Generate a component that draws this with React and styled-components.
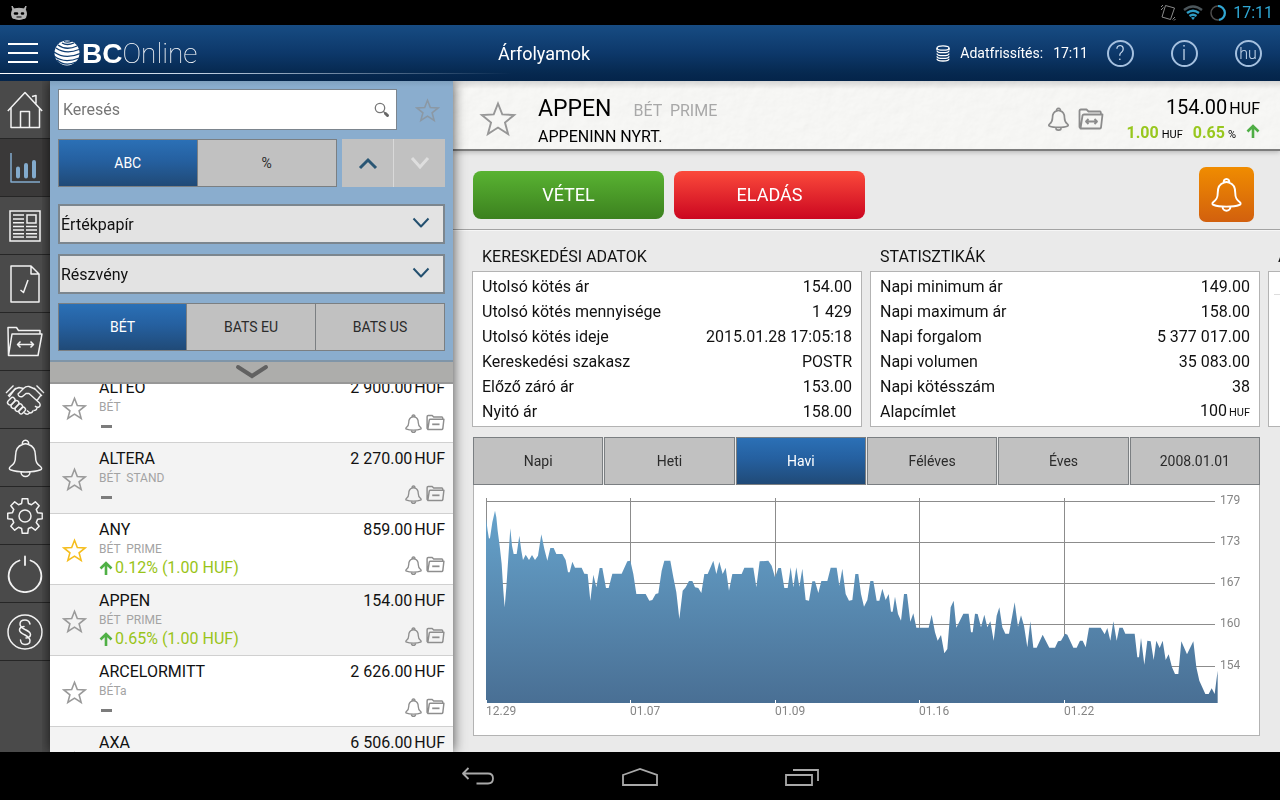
import { useState } from 'react';
import styled, { createGlobalStyle, css } from 'styled-components';

const quotes = [
  { name: 'ALTEO', market: 'BÉT', price: '2 900.00' },
  { name: 'ALTERA', market: 'BÉT  STAND', price: '2 270.00' },
  { name: 'ANY', market: 'BÉT  PRIME', price: '859.00', change: '0.12% (1.00 HUF)', favourite: true },
  { name: 'APPEN', market: 'BÉT  PRIME', price: '154.00', change: '0.65% (1.00 HUF)' },
  { name: 'ARCELORMITT', market: 'BÉTa', price: '2 626.00' },
  { name: 'AXA', market: 'BÉT', price: '6 506.00' },
];

const tradingData = [
  ['Utolsó kötés ár', '154.00'],
  ['Utolsó kötés mennyisége', '1 429'],
  ['Utolsó kötés ideje', '2015.01.28 17:05:18'],
  ['Kereskedési szakasz', 'POSTR'],
  ['Előző záró ár', '153.00'],
  ['Nyitó ár', '158.00'],
];

const statistics = [
  ['Napi minimum ár', '149.00'],
  ['Napi maximum ár', '158.00'],
  ['Napi forgalom', '5 377 017.00'],
  ['Napi volumen', '35 083.00'],
  ['Napi kötésszám', '38'],
  ['Alapcímlet', '100', 'HUF'],
];

const periods = ['Napi', 'Heti', 'Havi', 'Féléves', 'Éves', '2008.01.01'];

const priceLabels = [[179, 16], [173, 57], [167, 98], [160, 139], [154, 181]];
const dateLabels = [['12.29', 12], ['01.07', 156], ['01.09', 301], ['01.16', 445], ['01.22', 590]];

// price curve, y grows downwards
const firstHalf = [
  [63, 262], [68, 300], [72, 324], [75, 322], [82, 275], [90, 240], [94, 260], [98, 300], [104, 345], [110, 400],
  [115, 480], [119, 530], [124, 470], [130, 380], [136, 293], [141, 345], [146, 370], [155, 370], [163, 315],
  [169, 360], [174, 388], [182, 372], [192, 388], [201, 373], [210, 388], [219, 375], [229, 311], [238, 355],
  [247, 390], [256, 352], [266, 352], [274, 370], [292, 370], [302, 388], [309, 425], [314, 425], [322, 393],
  [330, 411], [350, 411], [358, 429], [368, 430], [376, 510], [385, 432], [394, 470], [404, 412], [412, 412],
  [423, 472], [431, 472], [442, 429], [470, 429], [487, 392], [496, 390], [505, 430], [514, 490], [542, 490],
  [553, 510], [562, 508], [572, 490], [580, 488], [590, 420], [598, 390], [616, 390], [625, 440], [634, 485],
  [643, 565], [653, 480], [662, 470], [672, 451], [682, 451], [690, 470], [700, 472], [709, 487], [718, 430],
  [728, 430], [745, 390], [754, 430], [763, 393], [773, 430], [782, 411], [792, 480], [802, 430], [830, 430],
  [838, 411], [865, 411], [874, 470], [884, 392], [910, 390], [920, 405], [930, 440], [940, 412], [948, 412],
  [958, 472], [968, 472], [977, 410], [985, 470], [994, 410], [1003, 468], [1012, 414], [1022, 508], [1032, 510],
  [1042, 452], [1050, 452], [1060, 487], [1069, 451], [1087, 451], [1097, 411], [1115, 411], [1123, 465],
  [1132, 414], [1142, 490], [1152, 510], [1162, 508], [1171, 430], [1180, 430], [1188, 490],
];
const secondHalf = [
  [12, 528], [22, 508], [31, 451], [40, 451], [50, 510], [58, 510], [67, 474], [77, 508], [86, 490], [93, 543],
  [98, 543], [105, 498], [114, 550], [123, 570], [132, 490], [141, 490], [151, 573], [160, 548], [169, 591],
  [206, 591], [215, 552], [225, 605], [233, 630], [243, 613], [253, 668], [262, 655], [272, 530], [281, 510],
  [289, 591], [310, 549], [326, 549], [333, 605], [338, 605], [345, 549], [353, 550], [363, 590], [373, 552],
  [382, 590], [391, 572], [401, 630], [410, 555], [418, 530], [427, 590], [436, 609], [447, 609], [464, 515],
  [474, 588], [483, 554], [492, 585], [502, 650], [511, 572], [520, 651], [530, 651], [548, 612], [568, 651],
  [585, 651], [594, 632], [603, 630], [615, 609], [622, 612], [640, 651], [650, 651], [660, 630], [668, 630],
  [677, 650], [687, 591], [722, 591], [734, 611], [742, 592], [751, 630], [760, 572], [770, 630], [778, 591],
  [788, 591], [796, 609], [824, 609], [832, 680], [837, 680], [843, 622], [853, 702], [862, 630], [872, 632],
  [881, 688], [889, 630], [899, 652], [908, 630], [917, 688], [926, 671], [936, 710], [945, 730], [955, 730],
  [964, 632], [981, 671], [1000, 632], [1009, 710], [1018, 750], [1036, 790], [1046, 790], [1055, 773],
  [1064, 790], [1069, 750], [1073, 720],
];
const curve = [[63, 817], ...firstHalf, ...secondHalf.map(([x, y]) => [x + 1185, y]), [2258, 817]];

const gearPath = () => {
  const points = [];
  for (let i = 0; i < 8; i += 1) {
    [[-15, 13], [-9, 17.5], [9, 17.5], [15, 13]].forEach(([offset, radius]) => {
      const angle = ((i * 45 + offset) * Math.PI) / 180;
      points.push(`${(18 + radius * Math.sin(angle)).toFixed(2)} ${(18 - radius * Math.cos(angle)).toFixed(2)}`);
    });
  }
  return `M${points.join('L')}Z`;
};

const Icon = ({ width, height, box, stroke = 1.5, children }) => (
  <svg
    width={width}
    height={height}
    viewBox={box ?? `0 0 ${width} ${height}`}
    fill="none"
    stroke="currentColor"
    strokeWidth={stroke}
    strokeLinejoin="round"
    aria-hidden="true"
  >
    {children}
  </svg>
);

const BellIcon = ({ width, height, stroke }) => (
  <Icon width={width} height={height} box="0 0 35 40" stroke={stroke}>
    <path d="M14.5 6.5A3.2 3.2 0 1 1 20.5 6.5M14.5 6.5C9.5 8 7.5 12 7.5 18C7.5 24 6 26 2.5 28.500C.8 30 1 31.500 3 32C9 34.500 26 34.500 32 32C34 31.500 34.200 30 32.500 28.500C29 26 27.500 24 27.500 18C27.500 12 25.500 8 20.500 6.500C19 5.800 16 5.800 14.500 6.500ZM13 34a4.500 4.500 0 0 0 9 0" />
  </Icon>
);

const StarIcon = ({ size, stroke = 1.5 }) => (
  <Icon width={size} height={size} box="0 0 24 24" stroke={stroke}>
    <path strokeLinejoin="miter" d="M12 2.200L14.700 9.100L22.200 9.500L16.400 14.200L18.400 21.500L12 17.400L5.600 21.500L7.600 14.200L1.800 9.500L9.300 9.100Z" />
  </Icon>
);

const FolderIcon = ({ width, height, stroke, mini }) => (
  <Icon width={width} height={height} box="0 0 26 22" stroke={stroke}>
    <path d="M2.500 20.500L1.500 19V3Q1.500 1.500 3 1.500H8.500L10.500 3.500H22Q23 3.500 23 6.500M2.500 20.500L4.500 7.500Q4.800 6.500 6 6.500H24.500L23 19.500Q22.800 20.500 22 20.500Z" />
    {mini ? (
      <path strokeWidth="2.400" d="M8.500 13.500H18.500" />
    ) : (
      <path d="M8 13.500H19M10.500 11L8 13.500L10.500 16M16.500 11L19 13.500L16.500 16" />
    )}
  </Icon>
);

const ArrowUp = () => (
  <Icon width={14} height={14} stroke={2.600}>
    <path strokeLinejoin="miter" d="M7 14V2M1.500 7.500L7 2L12.500 7.500" />
  </Icon>
);

const navItems = [
  { label: 'Kezdőlap', icon: (
    <Icon width={36} height={38}>
      <path d="M.8 20L18 1.500L35.200 20M4 17V36.500H32.500V17M13.500 36.500V20.500H22.500V36.500M25 5.500L29 4.500V12.500" />
    </Icon>
  ) },
  { label: 'Árfolyamok', active: true, icon: (
    <Icon width={30} height={30}>
      <path d="M1 0V29H30" />
      <path strokeWidth="4" strokeLinecap="round" d="M8 15.500V23.500M16 12V23.500M24 9V23.500" />
    </Icon>
  ) },
  { label: 'Hírek', icon: (
    <Icon width={32} height={32}>
      <path strokeLinejoin="miter" d="M1 1H31V31H1ZM18 5H27V13H18ZM4 5H15M4 9H15M4 12.700H15M4 16.500H15M4 20H15M4 23.700H15M4 27H15M17 16.500H28M17 20H28M17 23.700H28M17 27H28" />
    </Icon>
  ) },
  { label: 'Megbízások', icon: (
    <Icon width={30} height={38}>
      <path d="M1 1H21L29 9V37H1ZM21 1V9H29M10.500 25L13.500 27.500L18 15" />
    </Icon>
  ) },
  { label: 'Portfólió', icon: (
    <Icon width={36} height={31}>
      <path d="M1.500 29.500L1 1.500H9.500L11.500 4.500H33V8M1.500 29.500L5 8H35L31 29.500ZM10.500 18.500H26.500M13.500 15.500L10.500 18.500L13.500 21.500M23.500 15.500L26.500 18.500L23.500 21.500" />
    </Icon>
  ) },
  { label: 'Ügyletek', icon: (
    <Icon width={40} height={32} stroke={1.400}>
      <path d="M1 9L8.500 1.500M3 12L11 4M39 9L31.500 1.500M37 12L29 4" />
      <path d="M10 5L14 3.500L18.500 4.500M4 13L10 5M30 5L24 2.500Q21 2 18.500 4.500L13 10Q13.500 13.500 17.500 12.500L21 9.500H24L34.500 19Q36 21.500 34 23Q32 24 30 22M36 11L32 16.500M32 23.500Q32 26.500 28.500 26.500M28 26.500Q27.500 29 25 29L22 26.500M24.500 29Q22 31.500 19 28.500" />
      <rect x="4" y="13" width="5" height="8.500" rx="2.500" transform="rotate(45 6.500 17)" />
      <rect x="7.500" y="16" width="5" height="9" rx="2.500" transform="rotate(45 10 20.500)" />
      <rect x="11.500" y="19.500" width="5" height="8.500" rx="2.500" transform="rotate(45 14 23.500)" />
      <rect x="15" y="23" width="4.500" height="7.500" rx="2.200" transform="rotate(45 17.500 26.500)" />
    </Icon>
  ) },
  { label: 'Értesítések', icon: <BellIcon width={35} height={40} /> },
  { label: 'Beállítások', icon: (
    <Icon width={36} height={36}>
      <path d={gearPath()} />
      <circle cx="18" cy="18" r="6" />
    </Icon>
  ) },
  { label: 'Kilépés', icon: (
    <Icon width={36} height={38}>
      <path strokeLinecap="round" strokeWidth="1.800" d="M12.500 5.500A16.300 16.300 0 1 0 23.500 5.500M18 1.500V10" />
    </Icon>
  ) },
  { label: 'Jogi tudnivalók', icon: (
    <Icon width={36} height={36}>
      <circle cx="18" cy="18" r="17" />
      <path strokeLinecap="round" d="M23 10Q22 6 18 6Q13 6 13 10Q13 13 18 15.500Q23.500 18 23.500 20.500Q23.500 23.500 19 24M13.500 26Q14 30.500 18 30.500Q23 30.500 23 26.500Q23 24 18 21Q12.500 18.500 12.500 16Q12.500 13 17 12.500" />
    </Icon>
  ) },
];

const Quote = ({ quote }) => (
  <QuoteRow>
    <StarButton $active={quote.favourite} aria-label={`${quote.name} kedvenc`}>
      <StarIcon size={25} />
    </StarButton>
    <QuoteText>
      <QuoteName>{quote.name}</QuoteName>
      <QuoteMarket>{quote.market}</QuoteMarket>
      {quote.change ? (
        <QuoteChange><ArrowUp />{quote.change}</QuoteChange>
      ) : (
        <NoChange />
      )}
    </QuoteText>
    <QuoteSide>
      <QuotePrice>{quote.price}<span>HUF</span></QuotePrice>
      <QuoteTools>
        <IconButton aria-label="Riasztás"><BellIcon width={17} height={19} stroke={2.800} /></IconButton>
        <IconButton aria-label="Portfólió"><FolderIcon width={19} height={17} stroke={2} mini /></IconButton>
      </QuoteTools>
    </QuoteSide>
  </QuoteRow>
);

const DataPanel = ({ title, rows }) => (
  <Panel>
    <PanelTitle>{title}</PanelTitle>
    <PanelBox>
      <DataTable>
        <tbody>
          {rows.map(([label, value, unit]) => (
            <tr key={label}>
              <th scope="row">{label}</th>
              <td>{value}{unit && <SmallUnit>{unit}</SmallUnit>}</td>
            </tr>
          ))}
        </tbody>
      </DataTable>
    </PanelBox>
  </Panel>
);

const PriceChart = () => (
  <ChartSvg viewBox="0 0 785 250" role="img" aria-label="Havi árfolyam">
    <defs>
      <linearGradient id="area" gradientUnits="userSpaceOnUse" x1="0" y1="202" x2="0" y2="817">
        <stop offset="0" stopColor="#68a6cf" />
        <stop offset="1" stopColor="#496f94" />
      </linearGradient>
    </defs>
    {priceLabels.map(([price, y]) => (
      <g key={price}>
        <line x1="12" x2="741" y1={y + 0.5} y2={y + 0.5} />
        <text x="746" y={y + 3}>{price}</text>
      </g>
    ))}
    {dateLabels.map(([date, x]) => (
      <g key={date}>
        <line x1={x + 0.5} x2={x + 0.5} y1="13" y2="218" />
        <text x={x} y="230">{date}</text>
      </g>
    ))}
    <svg x="12" y="13" width="732" height="205" viewBox="63 202 2196 615">
      <polygon points={curve.map((p) => p.join(',')).join(' ')} fill="url(#area)" />
    </svg>
    {dateLabels.map(([date, x]) => (
      <line key={date} className="tick" x1={x + 0.5} x2={x + 0.5} y1="215" y2="219" />
    ))}
  </ChartSvg>
);

export default function App() {
  const [order, setOrder] = useState('ABC');
  const [exchange, setExchange] = useState('BÉT');
  const [period, setPeriod] = useState('Havi');

  return (
    <Screen>
      <GlobalStyle />
      <StatusBar>
        <Icon width={18} height={16}>
          <path fill="#b4b4b4" stroke="#b4b4b4" strokeWidth="1" d="M2 1L4 4Q9 2.500 14 4L16 1L15.500 4.500Q17.500 9 15.500 13Q9 16 2.500 13Q.5 9 2.500 4.500Z" />
          <path stroke="#000" strokeWidth="2.600" strokeLinecap="round" d="M5 8.500H7M12 8.500H13" />
          <path stroke="#000" strokeWidth="1" d="M6.500 12H11.500" />
        </Icon>
        <StatusIcons>
          <Icon width={16} height={17} stroke={1}>
            <path stroke="#8a8a8a" d="M5.500 1.500L14.500 4L10.500 15.500L2 13ZM1 3L3 1M1 6L3.500 3.500M12.500 15.500L15 13M14 16.500L15.500 15" />
          </Icon>
          <Icon width={20} height={16} stroke={2.400}>
            <path stroke="#4c565b" d="M1 5Q10-2 19 5" />
            <path stroke="#2e9cc4" d="M4 8Q10 3.500 16 8M6.500 11Q10 8.500 13.500 11" />
            <path fill="#2e9cc4" stroke="none" d="M8 12.500Q10 11.500 12 12.500L10 15Z" />
          </Icon>
          <Icon width={16} height={16}>
            <circle cx="8" cy="8" r="7" stroke="#4d4d4d" />
            <path stroke="#2fa8d5" strokeWidth="2.200" d="M8 1A7 7 0 0 1 9 14.900" />
          </Icon>
          <Clock>17:11</Clock>
        </StatusIcons>
      </StatusBar>

      <Header>
        <Brand>
          <MenuButton aria-label="Menü"><i /><i /><i /></MenuButton>
          <Logo href="#">
            <svg width="26" height="26" viewBox="0 0 26 26" aria-hidden="true">
              <circle cx="13" cy="13" r="12.500" fill="#fff" />
              <path
                fill="none"
                stroke="#0f3d70"
                strokeWidth="1.300"
                d="M8 3Q13 6 20 3M4 5Q12 11 23 6M2 8Q12 15 25 9.500M0 12Q11 20 26 13.500M0 16Q10 24 25 18M3 20Q11 27 22 22M10 1.500Q14 3 18 1"
              />
            </svg>
            <LogoText><b>BC</b>Online</LogoText>
          </Logo>
        </Brand>
        <Title>Árfolyamok</Title>
        <Refresh>
          <Icon width={14} height={17} stroke={1.300}>
            <ellipse cx="7" cy="3" rx="6" ry="2.200" />
            <path d="M1 5.500Q1 7.700 7 7.700T13 5.500M1 8.500Q1 10.700 7 10.700T13 8.500M1 11.200Q1 13.400 7 13.400T13 11.200M1 13.800Q1 16 7 16T13 13.800M1 3V5M13 3V5" />
          </Icon>
          <span>Adatfrissítés:</span>
          <span>17:11</span>
        </Refresh>
        <RoundButton aria-label="Súgó"><span>?</span></RoundButton>
        <RoundButton aria-label="Információ"><span>i</span></RoundButton>
        <RoundButton $small aria-label="Nyelv"><span>hu</span></RoundButton>
      </Header>

      <Body>
        <SideNav>
          {navItems.map(({ label, icon, active }) => (
            <NavLink key={label} href="#" $active={active} aria-label={label}>{icon}</NavLink>
          ))}
        </SideNav>

        <ListPane>
          <Filters>
            <FilterRow>
              <SearchBox>
                <input type="text" placeholder="Keresés" aria-label="Keresés" />
                <Icon width={16} height={16}>
                  <circle cx="6" cy="6" r="4.700" stroke="#777" strokeWidth="1.300" />
                  <path stroke="#777" strokeWidth="1.300" d="M9 9L11 11" />
                  <path stroke="#666" strokeWidth="3" strokeLinecap="round" d="M11.500 11.500L13.500 13.500" />
                </Icon>
              </SearchBox>
              <FavouriteFilter aria-label="Kedvencek"><StarIcon size={25} /></FavouriteFilter>
            </FilterRow>
            <FilterRow>
              <Segments>
                {['ABC', '%'].map((name) => (
                  <Segment key={name} $active={order === name} onClick={() => setOrder(name)}>{name}</Segment>
                ))}
              </Segments>
              <SortButtons>
                <SortButton aria-label="Növekvő">
                  <Icon width={20} height={14} stroke={3}><path strokeLinejoin="miter" stroke="#2a5674" d="M2 12L10 4L18 12" /></Icon>
                </SortButton>
                <SortButton aria-label="Csökkenő">
                  <Icon width={20} height={14} stroke={3}><path strokeLinejoin="miter" stroke="#dedede" d="M2 2L10 11L18 2" /></Icon>
                </SortButton>
              </SortButtons>
            </FilterRow>
            <Selects>
              {['Értékpapír', 'Részvény'].map((name) => (
                <SelectBox key={name}>
                  <select aria-label={name}><option>{name}</option></select>
                  <Icon width={18} height={12} stroke={2}><path d="M1.500 1.500L9 9.500L16.500 1.500" /></Icon>
                </SelectBox>
              ))}
            </Selects>
            <Segments>
              {['BÉT', 'BATS EU', 'BATS US'].map((name) => (
                <Segment key={name} $active={exchange === name} onClick={() => setExchange(name)}>{name}</Segment>
              ))}
            </Segments>
          </Filters>
          <Expander aria-label="Szűrők">
            <Icon width={34} height={16} stroke={4}><path strokeLinecap="round" strokeLinejoin="miter" d="M3 3L17 12L31 3" /></Icon>
          </Expander>
          <QuoteScroll>
            <QuoteList>
              {quotes.map((quote) => <Quote key={quote.name} quote={quote} />)}
            </QuoteList>
          </QuoteScroll>
        </ListPane>

        <Main>
          <StockHeader>
            <Paper aria-hidden="true">
              <filter id="paper" x="0" y="0" width="100%" height="100%">
                <feTurbulence type="fractalNoise" baseFrequency="0.07" numOctaves="4" seed="4" />
                <feDiffuseLighting lightingColor="#fff" surfaceScale="1">
                  <feDistantLight azimuth="235" elevation="62" />
                </feDiffuseLighting>
              </filter>
              <rect width="100%" height="100%" filter="url(#paper)" />
            </Paper>
            <StarButton aria-label="APPEN kedvenc"><StarIcon size={38} stroke={1.200} /></StarButton>
            <StockName>
              <h2>APPEN <span>{'BÉT  PRIME'}</span></h2>
              <p>APPENINN NYRT.</p>
            </StockName>
            <StockTools>
              <IconButton aria-label="Riasztás"><BellIcon width={21} height={24} stroke={2.800} /></IconButton>
              <IconButton aria-label="Portfólió"><FolderIcon width={26} height={22} stroke={1.800} /></IconButton>
            </StockTools>
            <StockPrice>
              <p>154.00<span>HUF</span></p>
              <div>
                <b>1.00</b><span>HUF</span>
                <b>0.65</b><span>%</span>
                <ArrowUp />
              </div>
            </StockPrice>
          </StockHeader>

          <Actions>
            <TradeButton $from="#59b332" $to="#3c811f">VÉTEL</TradeButton>
            <TradeButton $from="#fb4a3b" $to="#cb0620">ELADÁS</TradeButton>
            <AlertButton aria-label="Riasztás"><BellIcon width={31} height={35} stroke={2.200} /></AlertButton>
          </Actions>

          <Details>
            <Panels>
              <DataPanel title="KERESKEDÉSI ADATOK" rows={tradingData} />
              <DataPanel title="STATISZTIKÁK" rows={statistics} />
              <Panel>
                <PanelTitle>A</PanelTitle>
                <PanelBox><PanelRule /></PanelBox>
              </Panel>
            </Panels>
            <ChartCard>
              <Periods>
                {periods.map((name) => (
                  <Segment key={name} $active={period === name} onClick={() => setPeriod(name)}>{name}</Segment>
                ))}
              </Periods>
              <ChartBox><PriceChart /></ChartBox>
            </ChartCard>
          </Details>
        </Main>
      </Body>

      <SystemBar>
        <SystemButton aria-label="Vissza">
          <Icon width={34} height={20} stroke={1.800}><path d="M7.500 1L2 6.500L7.500 12M2 6.500H27Q32 6.500 32 11.500T27 16.500H15.500" /></Icon>
        </SystemButton>
        <SystemButton aria-label="Kezdőképernyő">
          <Icon width={38} height={20} stroke={1.800}><path strokeLinejoin="miter" d="M2 8L19 2L36 8V18H2Z" /></Icon>
        </SystemButton>
        <SystemButton aria-label="Legutóbbiak">
          <Icon width={36} height={20} stroke={1.800}><path strokeLinejoin="miter" d="M2 8H28V18H2ZM9 3H34V14" /></Icon>
        </SystemButton>
      </SystemBar>
    </Screen>
  );
}

const GlobalStyle = createGlobalStyle`
  * {
    box-sizing: border-box;
  }

  body {
    margin: 0;
    background: #000;
    color: #111;
    font-family: Roboto, 'Liberation Sans', sans-serif;
    font-size: 16px;
  }

  button, input, select {
    margin: 0;
    padding: 0;
    border: none;
    border-radius: 0;
    background: none;
    color: inherit;
    font: inherit;
  }

  h1, h2, h3, p, ul {
    margin: 0;
    padding: 0;
    font-weight: 400;
  }

  a {
    color: inherit;
    text-decoration: none;
  }

  svg {
    display: block;
    flex: none;
  }
`;

const Screen = styled.div`
  display: grid;
  grid-template-rows: 25px 56px minmax(0, 1fr) 48px;
  height: 100vh;
`;

const StatusBar = styled.div`
  display: flex;
  align-items: center;
  justify-content: space-between;
  padding: 0 7px 0 10px;
  background: #000;
`;

const StatusIcons = styled.div`
  display: flex;
  align-items: center;
  gap: 7px;
`;

const Clock = styled.span`
  color: #2fa8d5;
  line-height: 24px;
`;

const Header = styled.header`
  position: relative;
  display: flex;
  align-items: center;
  background: linear-gradient(#174c83, #0d386a 50%, #062950 85%, #04244a);
  color: #fff;

  &::after {
    content: '';
    position: absolute;
    left: 0;
    right: 0;
    bottom: 7px;
    height: 1px;
    background: linear-gradient(90deg, #fff, #c3d3e5 15%, rgba(255, 255, 255, 0) 40%);
  }
`;

const Brand = styled.div`
  display: flex;
  align-items: center;
  gap: 16px;
  flex: 0 0 498px;
  padding-left: 8px;
`;

const MenuButton = styled.button`
  display: grid;
  gap: 7px;
  width: 30px;

  i {
    height: 2px;
    background: #fff;
  }
`;

const Logo = styled.a`
  display: flex;
  align-items: center;
  gap: 2px;
`;

const LogoText = styled.span`
  padding-top: 2px;
  font-size: 28px;
  font-weight: 100;
  line-height: 32px;

  b {
    font-family: 'Liberation Sans', sans-serif;
    font-weight: 700;
  }
`;

const Title = styled.h1`
  flex: 1;
  padding-top: 2px;
  font-size: 18px;
  line-height: 24px;
`;

const Refresh = styled.div`
  display: flex;
  align-items: center;
  gap: 10px;
  font-size: 14px;
`;

const RoundButton = styled.button`
  flex: 0 0 64px;
  display: grid;
  place-items: center;

  span {
    width: 27px;
    height: 27px;
    border: 2px solid #a5c0df;
    border-radius: 50%;
    color: #c9dbef;
    font-size: ${(p) => (p.$small ? 16 : 20)}px;
    font-weight: 300;
    line-height: 23px;
    text-align: center;
  }
`;

const Body = styled.div`
  display: grid;
  grid-template-columns: 50px 403px minmax(0, 1fr);
  min-height: 0;
`;

const SideNav = styled.nav`
  overflow: hidden;
  background: #4a4a4a;
`;

const NavLink = styled.a`
  display: grid;
  place-items: center;
  height: 58px;
  border-bottom: 1px solid #262626;
  background: ${(p) => (p.$active ? '#3a3939' : 'none')};
  color: ${(p) => (p.$active ? '#83abcd' : '#f2f2f2')};
`;

const ListPane = styled.section`
  z-index: 1;
  display: flex;
  flex-direction: column;
  min-height: 0;
  box-shadow: 0 0 12px rgba(0, 0, 0, 0.7);
  clip-path: inset(0 -16px 0 -8px);
`;

const Filters = styled.div`
  display: grid;
  gap: 9px;
  padding: 8px 8px 9px;
  background: linear-gradient(#7fa0be, #8aadce 6px);
`;

const FilterRow = styled.div`
  display: flex;
  gap: 5px;
`;

const SearchBox = styled.div`
  position: relative;
  flex: 1;

  input {
    width: 100%;
    height: 41px;
    padding-left: 4px;
    border: 1px solid #7c858e;
    background: #fff;
  }

  input::placeholder {
    color: #777;
    opacity: 1;
  }

  svg {
    position: absolute;
    top: 13px;
    right: 7px;
  }
`;

const IconButton = styled.button`
  color: #8e8e8e;
`;

const StarButton = styled(IconButton)`
  display: grid;
  place-items: center;
  padding-top: 2px;
  color: ${(p) => (p.$active ? '#f5bd1c' : '#999')};
`;

const FavouriteFilter = styled(StarButton)`
  width: 43px;
  padding-left: 7px;
  color: #8b98a4;
`;

const Segments = styled.div`
  display: grid;
  grid-auto-flow: column;
  grid-auto-columns: 1fr;
  flex: 1;
`;

const Segment = styled.button`
  height: 48px;
  border: 1px solid #7b7f82;
  background: #c1c1c1;
  color: #2b2b2b;
  font-size: 14px;

  & + & {
    margin-left: -1px;
  }

  ${(p) => p.$active && css`
    background: linear-gradient(#2b70b6, #2560a0 45%, #204a77);
    color: #fff;
  `}
`;

const SortButtons = styled.div`
  display: grid;
  grid-template-columns: 1fr 1fr;
  gap: 1px;
  width: 103px;
  background: #d9d9d9;
`;

const SortButton = styled.button`
  display: grid;
  place-items: center;
  background: #c1c1c1;
`;

const Selects = styled.div`
  display: grid;
  gap: 10px;
  padding-top: 8px;
`;

const SelectBox = styled.div`
  position: relative;
  color: #24506f;

  select {
    appearance: none;
    width: 100%;
    height: 40px;
    padding-left: 1px;
    border: 2px solid #7c868e;
    background: #e3e3e3;
    color: #111;
  }

  svg {
    position: absolute;
    top: 13px;
    right: 15px;
    pointer-events: none;
  }
`;

const Expander = styled.button`
  display: grid;
  place-items: center;
  height: 24px;
  border-top: 2px solid #7f95a8;
  border-bottom: 2px solid #979797;
  background: #adadab;
  color: #616161;
`;

const QuoteScroll = styled.div`
  flex: 1;
  min-height: 0;
  overflow: hidden;
  background: #fff;
`;

/* scrolled a little, the first row is partly under the filters */
const QuoteList = styled.ul`
  margin-top: -12px;
  list-style: none;
`;

const QuoteRow = styled.li`
  display: grid;
  grid-template-columns: 49px 1fr auto;
  height: 71px;
  padding: 6px 8px 6px 0;
  border-bottom: 1px solid #d0d0d0;
  background: #fff;

  &:nth-child(even) {
    background: #f3f3f3;
  }
`;

const QuoteText = styled.div`
  display: grid;
  grid-template-rows: 20px 18px 20px;
`;

const QuoteName = styled.span`
  line-height: 20px;
`;

const QuoteMarket = styled.span`
  color: #a3a3a3;
  font-size: 12px;
  line-height: 18px;
  white-space: pre;
`;

const QuoteChange = styled.span`
  display: flex;
  align-items: center;
  gap: 2px;
  color: #99c418;
  line-height: 22px;

  svg {
    color: #4fb045;
  }
`;

const NoChange = styled.span`
  align-self: center;
  width: 11px;
  height: 3px;
  margin-left: 2px;
  background: #7c7c7c;
`;

const QuoteSide = styled.div`
  display: flex;
  flex-direction: column;
  justify-content: space-between;
  align-items: flex-end;
  padding-bottom: 3px;
`;

const QuotePrice = styled.span`
  display: flex;
  gap: 2px;
  line-height: 20px;
`;

const QuoteTools = styled.div`
  display: flex;
  align-items: flex-start;
  gap: 4px;
`;

const Main = styled.main`
  display: flex;
  flex-direction: column;
  min-height: 0;
  overflow: hidden;
  background: #eaeaea;
`;

const StockHeader = styled.div`
  position: relative;
  display: flex;
  align-items: center;
  height: 70px;
  padding: 6px 20px 0 26px;
  border-bottom: 2px solid #7d7d7d;
  background: linear-gradient(#d9d9d8, #f9f9f7 8px);
  box-shadow: 0 1px 5px rgba(0, 0, 0, 0.25);
`;

const Paper = styled.svg`
  position: absolute;
  inset: 0;
  width: 100%;
  height: 100%;
  opacity: 0.25;
  mix-blend-mode: multiply;
`;

const StockName = styled.div`
  flex: 1;
  padding: 8px 0 0 21px;
  color: #000;

  h2 {
    display: flex;
    align-items: baseline;
    gap: 22px;
    font-size: 23px;
    line-height: 28px;
  }

  span {
    color: #aaa;
    font-size: 16px;
    white-space: pre;
  }

  p {
    line-height: 24px;
  }
`;

const StockTools = styled.div`
  display: flex;
  align-items: center;
  gap: 9px;
  padding: 2px 23px 0 0;
`;

const StockPrice = styled.div`
  padding-top: 2px;
  color: #000;
  text-align: right;

  p {
    font-size: 20px;
    line-height: 28px;
  }

  p span {
    padding-left: 2px;
    font-size: 16px;
  }

  div {
    display: flex;
    align-items: baseline;
    gap: 3px;
    line-height: 20px;
  }

  b {
    color: #9aca1e;
  }

  div span {
    padding-right: 7px;
    font-size: 11px;
  }

  svg {
    color: #4fb045;
  }
`;

const Actions = styled.div`
  display: flex;
  align-items: center;
  gap: 10px;
  padding: 16px 26px 7px 20px;
  border-bottom: 1px solid #a3a3a3;
`;

const TradeButton = styled.button`
  flex: 0 1 191px;
  height: 48px;
  border-radius: 8px;
  background: linear-gradient(${(p) => p.$from}, ${(p) => p.$to});
  color: #fff;
  font-size: 18px;
`;

const AlertButton = styled.button`
  display: grid;
  place-items: center;
  width: 55px;
  height: 55px;
  margin-left: auto;
  border-radius: 7px;
  background: linear-gradient(#f08c00, #d2600e);
  color: #fff;
`;

const Details = styled.div`
  padding: 13px 20px 0 19px;
  border-top: 1px solid #f6f6f6;
`;

const Panels = styled.div`
  display: flex;
  gap: 8px;
`;

const Panel = styled.section`
  display: flex;
  flex-direction: column;
  flex: 0 0 calc(50% - 4px);
`;

const PanelTitle = styled.h3`
  padding: 0 10px 1px;
  font-size: 16px;
  line-height: 26px;
`;

const PanelBox = styled.div`
  flex: 1;
  padding: 2px 0 1px;
  border: 1px solid #b3b3b3;
  background: #fff;
`;

const PanelRule = styled.div`
  height: 21px;
  margin: 0 5px;
  border-bottom: 1px solid #ddd;
`;

const DataTable = styled.table`
  width: 100%;
  border-collapse: collapse;

  th, td {
    height: 25px;
    padding: 0 9px;
    font-weight: 400;
    line-height: 24px;
    text-align: left;
  }

  td {
    text-align: right;
  }
`;

const SmallUnit = styled.span`
  padding-left: 2px;
  font-size: 11px;
`;

const ChartCard = styled.section`
  margin: 10px 0 0 1px;
`;

const Periods = styled.div`
  display: grid;
  grid-template-columns: repeat(6, 1fr);
  gap: 1px;

  ${Segment} {
    margin-left: 0;
  }
`;

const ChartBox = styled.div`
  border: 1px solid #b3b3b3;
  border-top: none;
  background: #fff;
`;

const ChartSvg = styled.svg`
  width: 100%;
  height: auto;

  line {
    stroke: #8c8c8c;
    stroke-width: 1;
  }

  .tick {
    stroke: #fff;
  }

  text {
    fill: #858585;
    font-size: 12px;
  }
`;

const SystemBar = styled.footer`
  display: flex;
  align-items: center;
  justify-content: center;
  background: #000;
`;

const SystemButton = styled.button`
  display: grid;
  place-items: center;
  width: 162px;
  height: 48px;
  padding-top: 2px;
  color: #a9a9a9;
`;
